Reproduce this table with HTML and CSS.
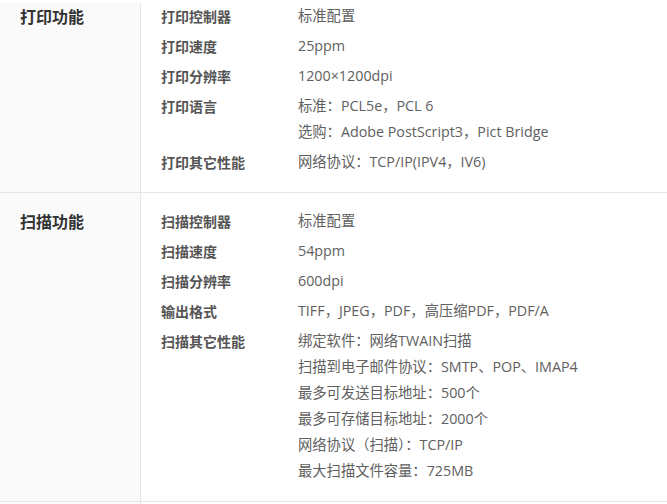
FILE: index.html
```html
<!DOCTYPE html>
<html lang="zh-CN">
<head>
<meta charset="utf-8">
<link rel="stylesheet" href="styles.css">
</head>
<body>
<div class="spec">
  <div class="section section--first">
    <div class="side"><h3 class="title">打印功能</h3></div>
    <div class="rows">
      <div class="row"><div class="label">打印控制器</div><div class="value"><p>标准配置</p></div></div>
      <div class="row"><div class="label">打印速度</div><div class="value"><p>25ppm</p></div></div>
      <div class="row"><div class="label">打印分辨率</div><div class="value"><p>1200×1200dpi</p></div></div>
      <div class="row"><div class="label">打印语言</div><div class="value"><p>标准：PCL5e，PCL 6</p><p>选购：Adobe PostScript3，Pict Bridge</p></div></div>
      <div class="row"><div class="label">打印其它性能</div><div class="value"><p>网络协议：TCP/IP(IPV4，IV6)</p></div></div>
    </div>
  </div>
  <div class="section">
    <div class="side"><h3 class="title">扫描功能</h3></div>
    <div class="rows">
      <div class="row"><div class="label">扫描控制器</div><div class="value"><p>标准配置</p></div></div>
      <div class="row"><div class="label">扫描速度</div><div class="value"><p>54ppm</p></div></div>
      <div class="row"><div class="label">扫描分辨率</div><div class="value"><p>600dpi</p></div></div>
      <div class="row"><div class="label">输出格式</div><div class="value"><p>TIFF，JPEG，PDF，高压缩PDF，PDF/A</p></div></div>
      <div class="row"><div class="label">扫描其它性能</div><div class="value"><p>绑定软件：网络TWAIN扫描</p><p>扫描到电子邮件协议：SMTP、POP、IMAP4</p><p>最多可发送目标地址：500个</p><p>最多可存储目标地址：2000个</p><p>网络协议（扫描）：TCP/IP</p><p>最大扫描文件容量：725MB</p></div></div>
    </div>
  </div>
  <div class="section">
    <div class="side"></div>
    <div class="rows"></div>
  </div>
</div>
</body>
</html>
```
FILE: styles.css
```css
html, body {
  margin: 0;
  padding: 0;
  background: #fff;
}
body {
  font-family: "Noto Sans CJK SC", "Microsoft YaHei", sans-serif;
  color: #555;
}
.spec {
  margin-top: 3px;
}
.section {
  display: flex;
  border-bottom: 1px solid #e6e6e6;
}
.side {
  width: 141px;
  flex: none;
  background: #fafafa;
  border-right: 1px solid #e6e6e6;
  padding: 15px 0 17px 20px;
  box-sizing: border-box;
}
.section--first .side,
.section--first .rows {
  padding-top: 0;
}
.title {
  margin: 0;
  font-size: 16px;
  line-height: 26px;
  font-weight: bold;
  color: #333;
}
.rows {
  flex: 1;
  display: flex;
  flex-direction: column;
  gap: 4px;
  padding: 15px 0 17px 20px;
  min-height: 60px;
}
.row {
  display: flex;
  font-size: 14px;
  line-height: 26px;
}
.label {
  width: 137px;
  flex: none;
  font-weight: bold;
  color: #555;
}
.value {
  font-family: "Open Sans", "Noto Sans CJK SC", sans-serif;
  font-size: 14.3px;
  color: #606060;
}
.value p {
  margin: 0;
}
```
